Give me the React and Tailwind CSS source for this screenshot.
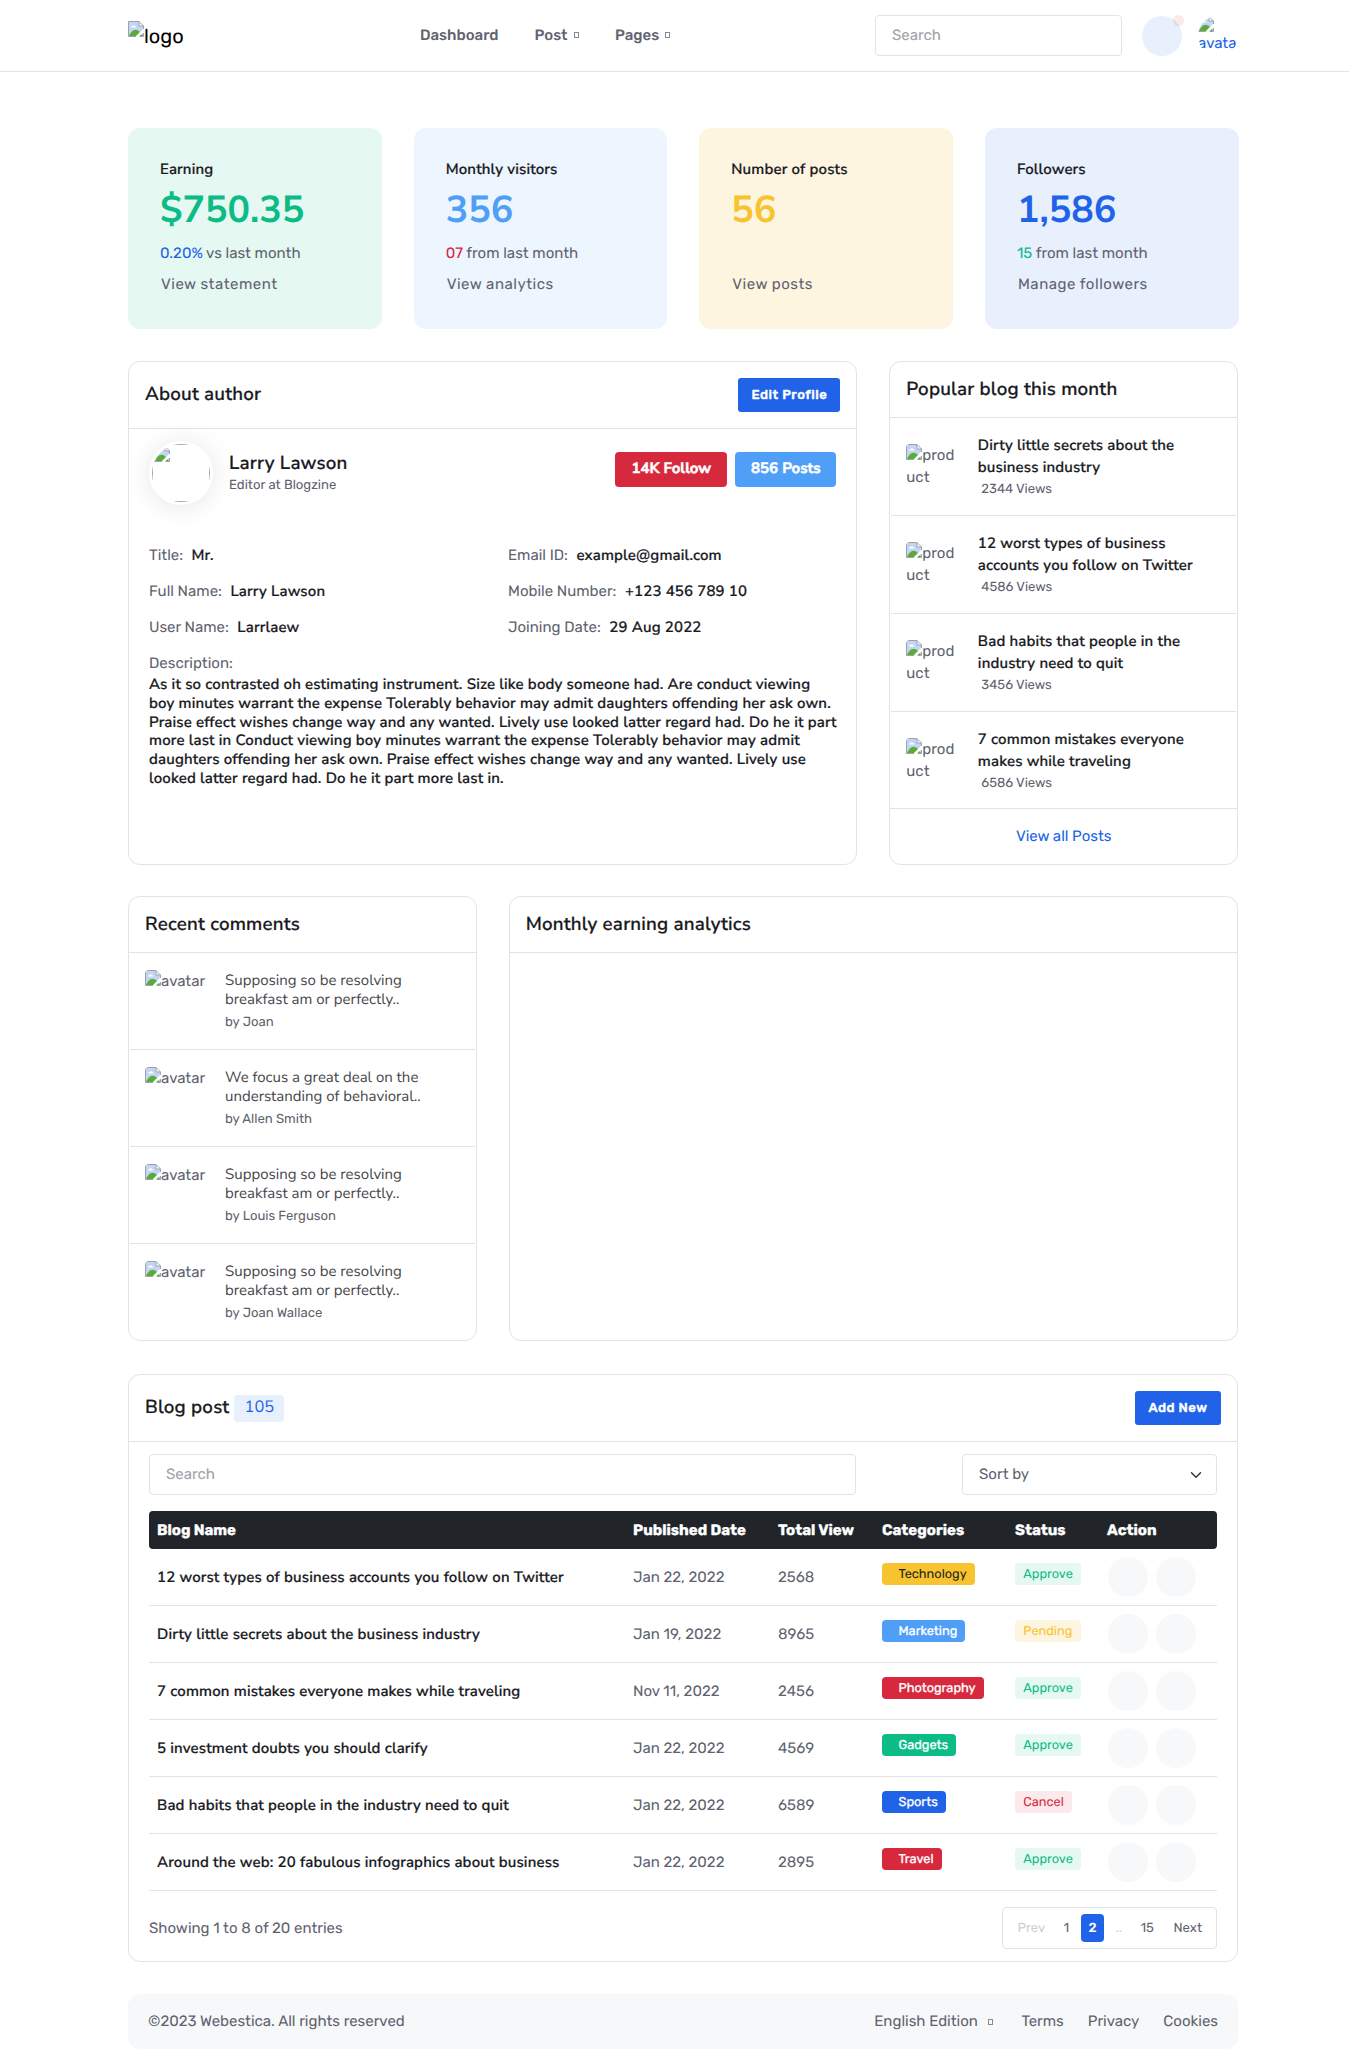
import React from "react";

const head =
  "font-['Nunito_Sans',Nunito,'Open_Sans',sans-serif] font-semibold tracking-[0.0105em] text-[#191a1f] [-webkit-text-stroke:0.2px]";

function BrokenIcon({ className = "" }) {
  return (
    <svg width="16" height="16" viewBox="0 0 16 16" className={`block shrink-0 ${className}`} aria-hidden="true">
      <path d="M0.5 0.5H11L15.5 5V15.5H0.5Z" fill="#fff" />
      <path d="M1 1H11V5H15V15H1Z" fill="#c3d4f6" />
      <path d="M3 6.5c0-1 .8-1.6 1.6-1.5C5 4 6.8 4 7.2 5.2c.9 0 1.3.6 1.3 1.3z" fill="#fff" />
      <path d="M1 15c1.5-3.500 4-6.300 6.500-6.300 2 0 3.500 1 4.500 2.300L15 15z" fill="#5aac3a" />
      <path d="M15.500 7.500L7.500 15.500H11L15.500 11.500Z" fill="#fff" />
      <path d="M11 1v4h4z" fill="#fff" />
      <path d="M15.500 8V5L11 .5H.5v15H8M11 .5V5h4.500M11.500 15.500h4v-3.500" fill="none" stroke="#a0a3a6" strokeWidth="1" />
    </svg>
  );
}

function Tofu({ className = "" }) {
  return <span className={`inline-block h-1.5 w-[5px] border border-[#85888f] ${className}`} />;
}

const stats = [
  { label: "Earning", value: "$750.35", delta: "0.20%", note: " vs last month", link: "View statement", bg: "bg-[#e5f8f2]", fg: "text-[#0cbc87]", df: "text-[#2163e8]" },
  { label: "Monthly visitors", value: "356", delta: "07", note: " from last month", link: "View analytics", bg: "bg-[#edf5fe]", fg: "text-[#4f9ef8]", df: "text-[#d6293e]" },
  { label: "Number of posts", value: "56", delta: "", note: "", link: "View posts", bg: "bg-[#fef5e0]", fg: "text-[#f7c32e]", df: "" },
  { label: "Followers", value: "1,586", delta: "15", note: " from last month", link: "Manage followers", bg: "bg-[#e8effd]", fg: "text-[#2163e8]", df: "text-[#0cbc87]" },
];

const fields = [
  ["Title:", "Mr."],
  ["Email ID:", "example@gmail.com"],
  ["Full Name:", "Larry Lawson"],
  ["Mobile Number:", "+123 456 789 10"],
  ["User Name:", "Larrlaew"],
  ["Joining Date:", "29 Aug 2022"],
];

const popular = [
  [["Dirty little secrets about the", "business industry"], "2344 Views"],
  [["12 worst types of business", "accounts you follow on Twitter"], "4586 Views"],
  [["Bad habits that people in the", "industry need to quit"], "3456 Views"],
  [["7 common mistakes everyone", "makes while traveling"], "6586 Views"],
];

const comments = [
  [["Supposing so be resolving", "breakfast am or perfectly.."], "by Joan"],
  [["We focus a great deal on the", "understanding of behavioral.."], "by Allen Smith"],
  [["Supposing so be resolving", "breakfast am or perfectly.."], "by Louis Ferguson"],
  [["Supposing so be resolving", "breakfast am or perfectly.."], "by Joan Wallace"],
];

const tones = {
  Technology: "bg-[#f7c32e] text-[#222]",
  Marketing: "bg-[#4f9ef8] text-white [-webkit-text-stroke:0.3px]",
  Photography: "bg-[#d6293e] text-white [-webkit-text-stroke:0.3px]",
  Gadgets: "bg-[#0cbc87] text-white [-webkit-text-stroke:0.3px]",
  Sports: "bg-[#2163e8] text-white [-webkit-text-stroke:0.3px]",
  Travel: "bg-[#d6293e] text-white [-webkit-text-stroke:0.3px]",
  Approve: "bg-[#e5f8f2] text-[#0cbc87]",
  Pending: "bg-[#fef5e0] text-[#f7c32e]",
  Cancel: "bg-[#fbe9ec] text-[#d6293e]",
};

const posts = [
  ["12 worst types of business accounts you follow on Twitter", "Jan 22, 2022", "2568", "Technology", "Approve"],
  ["Dirty little secrets about the business industry", "Jan 19, 2022", "8965", "Marketing", "Pending"],
  ["7 common mistakes everyone makes while traveling", "Nov 11, 2022", "2456", "Photography", "Approve"],
  ["5 investment doubts you should clarify", "Jan 22, 2022", "4569", "Gadgets", "Approve"],
  ["Bad habits that people in the industry need to quit", "Jan 22, 2022", "6589", "Sports", "Cancel"],
  ["Around the web: 20 fabulous infographics about business", "Jan 22, 2022", "2895", "Travel", "Approve"],
];

const columns = "grid grid-cols-[476px_145px_104px_133px_92px_1fr] pl-2";
const button =
  "h-[34px] rounded-[3px] bg-[#2163e8] text-center text-[13.125px] font-medium tracking-[0.5px] whitespace-nowrap text-white [-webkit-text-stroke:0.4px]";

function Card({ className = "", children }) {
  return <section className={`flex flex-col rounded-xl border border-[#e3e3e5] bg-white ${className}`}>{children}</section>;
}

function CardTitle({ className = "", children }) {
  return <h5 className={`${head} text-[18.75px] leading-[23px] ${className}`}>{children}</h5>;
}

function Header({ children }) {
  return <div className="border-b border-[#e3e3e5] p-4">{children}</div>;
}

function Nav() {
  return (
    <header className="h-[72px] border-b border-[#e3e3e5]">
      <div className="ml-32 flex h-[71px] w-[1110px] items-start">
        <div className="flex w-[292px] pt-[21px] text-[20px] leading-[30px] text-black">
          <BrokenIcon />
          <span>logo</span>
        </div>
        <nav className="flex w-[455px] pt-6 font-medium text-[#5f636f]">
          <span className="w-[114.500px]">Dashboard</span>
          <span className="flex w-[80.500px] items-center">
            Post <Tofu className="ml-[6px]" />
          </span>
          <span className="flex items-center">
            Pages <Tofu className="ml-[6px]" />
          </span>
        </nav>
        <div className="mt-[15px] h-[41px] w-[247px] rounded border border-[#e3e3e5] px-4 py-[8.300px] text-[#a1a1a8]">Search</div>
        <div className="relative mt-4 ml-5 size-10 rounded-full bg-[#e8effd]">
          <span className="absolute -top-px right-[-1.500px] size-[10.500px] rounded-full bg-[#d6293e]/10" />
        </div>
        <div className="mt-4 ml-4 h-10 w-10 overflow-hidden rounded-full text-[#2163e8]">
          <BrokenIcon />
          <div>avata</div>
        </div>
      </div>
    </header>
  );
}

export default function App() {
  return (
    <div className="h-[2064px] w-full overflow-hidden bg-white font-['Rubik',Roboto,sans-serif] text-[15px] leading-[22.5px] text-[#5f636f] [text-rendering:geometricPrecision]">
      <Nav />
      <main className="ml-32 w-[1110px] pt-14">
        <div className="-mr-[0.600px] grid grid-cols-4 gap-8">
          {stats.map((s) => (
            <div key={s.label} className={`h-[201px] rounded-xl p-8 pt-[33px] ${s.bg}`}>
              <h6 className={`${head} leading-[18.75px]`}>{s.label}</h6>
              <div className={`font-['Nunito_Sans',Nunito,'Open_Sans',sans-serif] mt-2 text-[37.5px] leading-[46.9px] font-bold ${s.fg}`}>{s.value}</div>
              <p className="mt-[7px] h-[22.5px] whitespace-pre">
                <span className={s.df}>{s.delta}</span>
                {s.note}
              </p>
              <p className="mt-[9px] pl-px tracking-[0.5px]">{s.link}</p>
            </div>
          ))}
        </div>

        <div className="mt-8 grid h-[503.500px] grid-cols-3 gap-8">
          <Card className="col-span-2">
            <div className="flex items-center justify-between border-b border-[#e3e3e5] p-4">
              <CardTitle className="pb-0.5">About author</CardTitle>
              <button className={`${button} w-[102px]`}>Edit Profile</button>
            </div>
            <div className="px-5 pt-3">
              <div className="flex h-16 items-start">
                <div className="size-16 rounded-full bg-white p-[3px] shadow-[0_2px_26px_rgba(0,0,0,0.1)]">
                  <div className="size-[58px] overflow-hidden rounded-full">
                    <div className="size-[58px] border border-[#a5a5a5] p-px">
                      <BrokenIcon />
                    </div>
                  </div>
                </div>
                <div className="ml-4 flex-1 pt-[10.500px]">
                  <CardTitle>Larry Lawson</CardTitle>
                  <div className="pt-px text-[13.125px] leading-5">Editor at Blogzine</div>
                </div>
                <div className="font-['Nunito_Sans',Nunito,'Open_Sans',sans-serif] mt-[11px] flex gap-2 text-center leading-[35px] font-bold text-white [-webkit-text-stroke:0.5px]">
                  <span className="h-[35px] w-28 rounded bg-[#d6293e]">14K Follow</span>
                  <span className="h-[35px] w-[101px] rounded bg-[#4f9ef8]">856 Posts</span>
                </div>
              </div>
              <div className="mt-8 grid grid-cols-[359px_1fr]">
                {fields.map(([k, v]) => (
                  <div key={k} className="flex h-9 items-center gap-[8.500px]">
                    <span>{k}</span>
                    <span className={`${head} pt-0.5`}>{v}</span>
                  </div>
                ))}
              </div>
              <div className="mt-[6.500px]">Description:</div>
              <p className={`${head} mt-0.5 leading-[18.75px] whitespace-nowrap`}>
                As it so contrasted oh estimating instrument. Size like body someone had. Are conduct viewing
                <br />
                boy minutes warrant the expense Tolerably behavior may admit daughters offending her ask own.
                <br />
                Praise effect wishes change way and any wanted. Lively use looked latter regard had. Do he it part
                <br />
                more last in Conduct viewing boy minutes warrant the expense Tolerably behavior may admit
                <br />
                daughters offending her ask own. Praise effect wishes change way and any wanted. Lively use
                <br />
                looked latter regard had. Do he it part more last in.
              </p>
            </div>
          </Card>

          <Card>
            <Header>
              <CardTitle>Popular blog this month</CardTitle>
            </Header>
            <div>
              {popular.map(([lines, views], i) => (
                <div key={views}>
                  {i > 0 && <div className="mx-px h-px bg-[#e3e3e5]" />}
                  <div className={`flex items-center px-4 ${i === 3 ? "h-24" : "h-[97px] pb-px"}`}>
                    <div className="w-[71.500px]">
                      <div className="flex">
                        <BrokenIcon className="rounded-tl" />
                        <span>prod</span>
                      </div>
                      <div>uct</div>
                    </div>
                    <div className="pt-0.5">
                      <h6 className={head}>
                        {lines[0]}
                        <br />
                        {lines[1]}
                      </h6>
                      <div className="pl-[3.500px] text-[13.125px] leading-[19.700px]">{views}</div>
                    </div>
                  </div>
                </div>
              ))}
            </div>
            <div className="border-t border-[#e3e3e5] py-4 text-center text-[#2163e8]">View all Posts</div>
          </Card>
        </div>

        <div className="mt-[31.500px] grid h-[445px] grid-cols-3 gap-8">
          <Card>
            <Header>
              <CardTitle>Recent comments</CardTitle>
            </Header>
            {comments.map(([lines, by], i) => (
              <div key={by}>
                {i > 0 && <div className="mx-px h-px bg-[#e3e3e5]" />}
                <div className="flex h-24 px-4 pt-[17px]">
                  <div className="flex w-20">
                    <BrokenIcon className="rounded-tl" />
                    <span>avatar</span>
                  </div>
                  <div className="pt-0.5">
                    <p className="font-['Nunito_Sans',Nunito,'Open_Sans',sans-serif] leading-[18.75px] text-[#45464b]">
                      {lines[0]}
                      <br />
                      {lines[1]}
                    </p>
                    <p className="mt-[2.500px] text-[13.125px] leading-[22.5px]">{by}</p>
                  </div>
                </div>
              </div>
            ))}
          </Card>
          <Card className="col-span-2">
            <Header>
              <CardTitle>Monthly earning analytics</CardTitle>
            </Header>
          </Card>
        </div>

        <Card className="mt-[33px] h-[588px]">
          <div className="flex items-center justify-between border-b border-[#e3e3e5] p-4">
            <div className="flex items-center">
              <CardTitle className="pb-0.5">Blog post</CardTitle>
              <span className="font-['Nunito_Sans',Nunito,'Open_Sans',sans-serif] ml-[5px] h-[27px] w-[50px] rounded bg-[#e8effd] text-center text-[16.400px] leading-[24px] text-[#2163e8]">
                105
              </span>
            </div>
            <button className={`${button} w-[86px]`}>Add New</button>
          </div>
          <div className="px-5 pt-3">
            <div className="flex justify-between">
              <div className="h-[41px] w-[707px] rounded border border-[#e3e3e5] px-4 py-[8.300px] text-[#a1a1a8]">Search</div>
              <div className="flex h-[41px] w-[255px] items-center justify-between rounded border border-[#e3e3e5] pr-[14px] pl-4">
                <span>Sort by</span>
                <svg width="12" height="12" viewBox="0 0 16 16" className="mt-px" fill="none" stroke="#343a40" strokeWidth="2" strokeLinecap="round" strokeLinejoin="round">
                  <path d="M2 5l6 6 6-6" />
                </svg>
              </div>
            </div>
            <div className={`${columns} mt-4 h-[38px] items-center rounded bg-[#212529] font-bold text-white [-webkit-text-stroke:0.3px]`}>
              <span>Blog Name</span>
              <span>Published Date</span>
              <span>Total View</span>
              <span>Categories</span>
              <span>Status</span>
              <span>Action</span>
            </div>
            {posts.map(([name, date, views, cat, status]) => (
              <div key={name} className={`${columns} h-[57px] items-center border-b border-[#e3e3e5]`}>
                <h6 className={`${head} pt-0.5 leading-[18.75px]`}>{name}</h6>
                <span>{date}</span>
                <span>{views}</span>
                <div className="flex pb-[6px]">
                  <span className={`h-[22px] rounded pr-2 pl-[16.500px] text-[12.750px] leading-[23.500px] ${tones[cat]}`}>{cat}</span>
                </div>
                <div className="flex pb-[6px]">
                  <span className={`h-[22px] rounded px-[8.300px] text-[12.750px] leading-[23.500px] ${tones[status]}`}>{status}</span>
                </div>
                <div className="flex gap-2 pl-px">
                  <span className="size-10 rounded-full bg-[#f7f8fa]" />
                  <span className="size-10 rounded-full bg-[#f7f8fa]" />
                </div>
              </div>
            ))}
            <div className="mt-4 flex h-[42px] items-center justify-between">
              <span>Showing 1 to 8 of 20 entries</span>
              <div className="flex h-[42px] w-[215px] items-center rounded border border-[#e3e3e5] pl-[14.500px] text-[13.125px] leading-6">
                <span className="w-[46px] pt-px text-[#cdced2]">Prev</span>
                <span className="w-[17.500px] pt-px">1</span>
                <span className="h-7 w-[23px] rounded bg-[#2163e8] text-center leading-[29.500px] font-medium text-white">2</span>
                <span className="ml-[11.500px] w-[25px] pt-px text-[#cdced2]">..</span>
                <span className="w-[33px] pt-px">15</span>
                <span className="pt-px">Next</span>
              </div>
            </div>
          </div>
        </Card>

        <footer className="mt-8 flex h-[55px] items-center rounded-xl bg-[#f7f8fa] pr-5 pl-5">
          <span className="flex-1">©2023 Webestica. All rights reserved</span>
          <span className="flex items-center">
            English Edition <Tofu className="ml-[10.500px]" />
          </span>
          <span className="ml-7">Terms</span>
          <span className="ml-6">Privacy</span>
          <span className="ml-6">Cookies</span>
        </footer>
      </main>
    </div>
  );
}
